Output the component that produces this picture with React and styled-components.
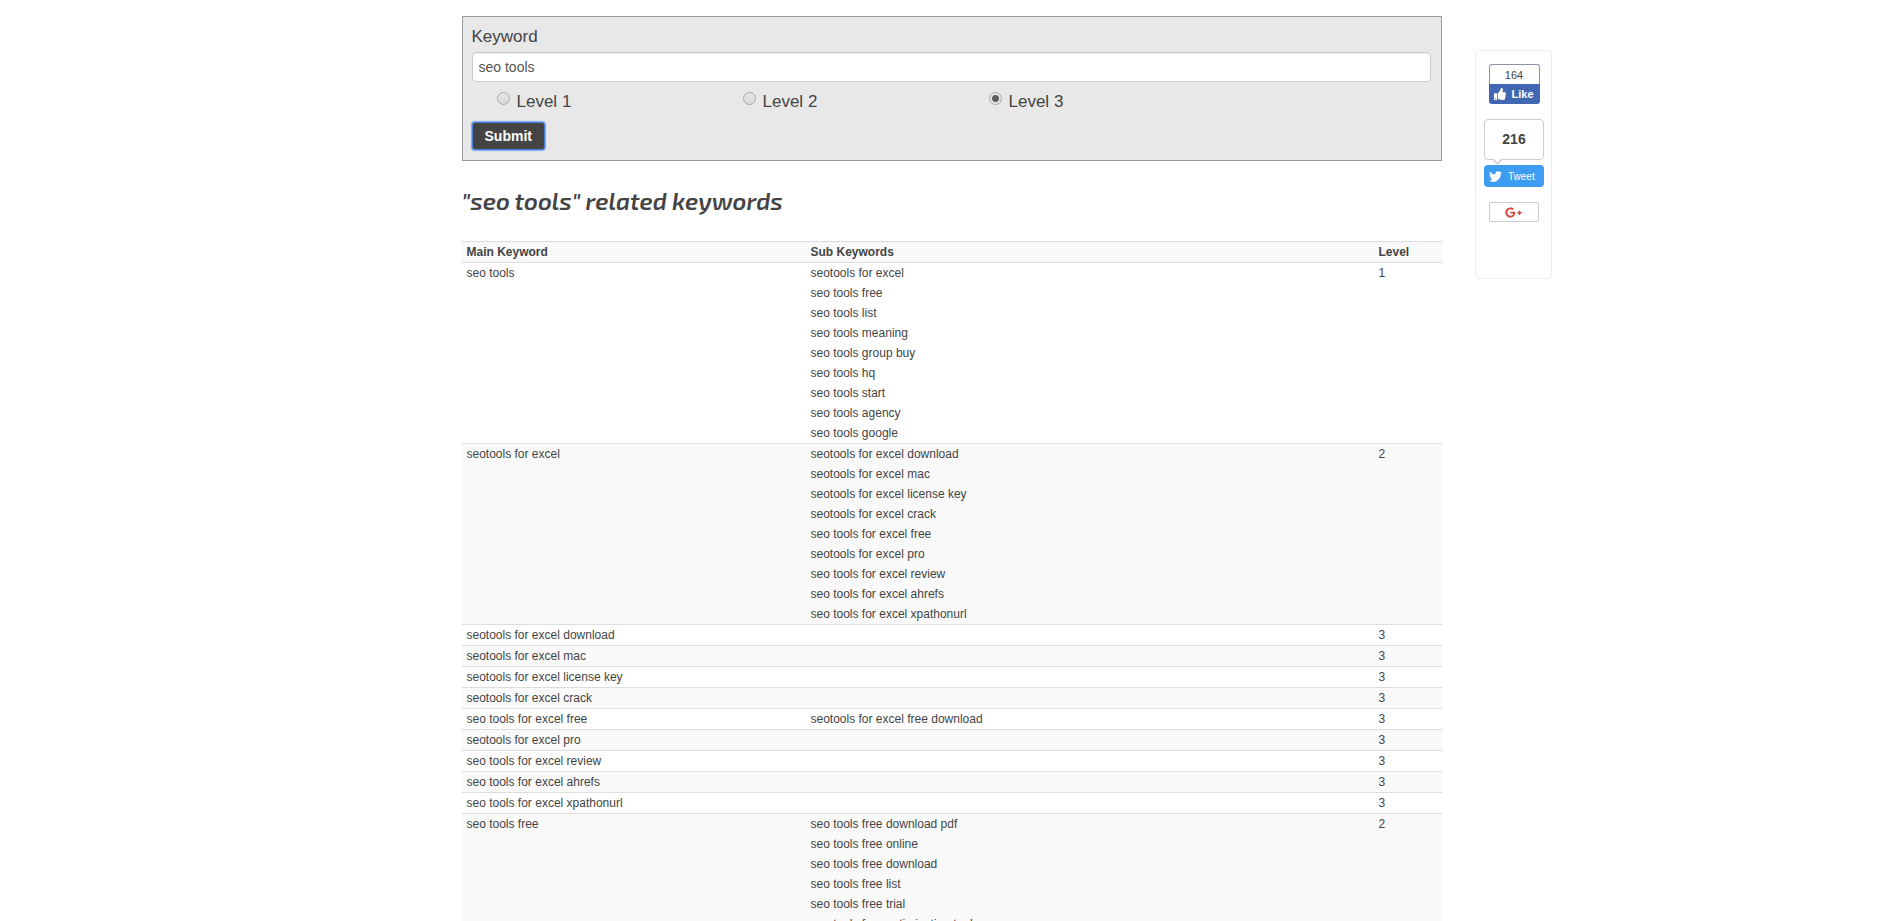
import React, { useState } from 'react';
import styled, { createGlobalStyle } from 'styled-components';
import { FaGooglePlusG, FaThumbsUp, FaTwitter } from 'react-icons/fa';

const COLORS = {
  text: '#444',
  line: '#ddd',
  stripe: '#f9f9f9',
  panel: '#e8e8e8',
  facebook: '#4267b2',
  twitter: '#3e9cf3',
  google: '#db4437'
};

const GlobalStyle = createGlobalStyle`
  * {
    box-sizing: border-box;
  }

  body {
    margin: 0;
    background: #fff;
    color: ${COLORS.text};
    font-family: Arial, "Liberation Sans", sans-serif;
    font-size: 12px;
    line-height: 20px;
  }
`;

const Page = styled.div`
  display: grid;
  grid-template-columns: 1fr minmax(0, 980px) 1fr;
  align-items: start;
`;

const Main = styled.main`
  grid-column: 2;
  padding-top: 16px;
`;

const SearchForm = styled.form`
  padding: 8px 10px 10px 9px;
  background: ${COLORS.panel};
  border: 1px solid #999;
`;

const FieldLabel = styled.label`
  display: block;
  margin-bottom: 3px;
  font-size: 17px;
  line-height: 24px;
`;

const KeywordInput = styled.input`
  display: block;
  width: 100%;
  height: 30px;
  padding: 4px 6px;
  background: #fff;
  border: 1px solid #ccc;
  border-radius: 4px;
  box-shadow: inset 0 1px 1px rgba(0, 0, 0, 0.075);
  color: #555;
  font-family: inherit;
  font-size: 14px;
  line-height: 20px;
`;

const Levels = styled.div`
  display: grid;
  grid-template-columns: repeat(3, 246px);
  padding: 8px 0 8px 25px;
`;

const LevelLabel = styled.label`
  display: flex;
  align-items: flex-start;
  gap: 7px;
  font-size: 17px;
  line-height: 24px;
`;

const Radio = styled.input`
  appearance: none;
  width: 13px;
  height: 13px;
  margin: 2px 0 0;
  border: 1px solid #a9a9a9;
  border-radius: 50%;
  background: linear-gradient(#e6e6e6, #d8d8d8);

  &:checked {
    background: radial-gradient(circle, #5c5c5c 3px, #e4e4e4 4px);
  }
`;

const SubmitButton = styled.button`
  display: block;
  height: 28px;
  padding: 4px 12px;
  background: ${COLORS.text};
  border: 1px solid #4c7fd6;
  border-radius: 3px;
  box-shadow: 0 0 1px 1px #7ba6ee;
  color: #fff;
  font-family: inherit;
  font-size: 14px;
  font-weight: 700;
  line-height: 18px;
`;

const Title = styled.h1`
  margin: 22px 0;
  font-family: "Exo 2", Roboto, sans-serif;
  font-size: 24px;
  font-style: italic;
  font-weight: 600;
  line-height: 36px;
`;

const KeywordTable = styled.table`
  width: 100%;
  border-collapse: collapse;
  border-spacing: 0;
  table-layout: fixed;
`;

const Column = styled.col`
  width: ${({ $width }) => $width};
`;

const Row = styled.tr`
  border-top: 1px solid ${COLORS.line};
  background: ${({ $striped }) => ($striped ? COLORS.stripe : '#fff')};
`;

const HeadCell = styled.th`
  padding: 0 5px;
  text-align: left;
`;

const Cell = styled.td`
  padding: 0 5px;
  vertical-align: top;
`;

const SubKeywords = styled.ul`
  margin: 0;
  padding: 0;
  list-style: none;
`;

const ShareBox = styled.aside`
  grid-column: 3;
  display: flex;
  flex-direction: column;
  align-items: center;
  width: 77px;
  min-height: 229px;
  margin: 50px 0 0 33px;
  padding: 13px 0 0 2px;
  border: 1px solid #eee;
  border-radius: 4px;
`;

const ShareItem = styled.div`
  display: flex;
  flex-direction: column;
  margin-bottom: 15px;
`;

const LikeCount = styled.div`
  height: 20px;
  border: 1px solid #8a93a8;
  border-bottom: 0;
  border-radius: 3px 3px 0 0;
  font-size: 11px;
  text-align: center;
`;

const LikeButton = styled.button`
  display: flex;
  align-items: center;
  justify-content: center;
  gap: 5px;
  width: 51px;
  height: 20px;
  padding: 0;
  background: ${COLORS.facebook};
  border: 0;
  border-radius: 0 0 3px 3px;
  color: #fff;
  font-family: inherit;
  font-size: 11px;
  font-weight: 700;
`;

const TweetCount = styled.div`
  position: relative;
  height: 41px;
  margin-bottom: 5px;
  border: 1px solid #ccc;
  border-radius: 4px;
  font-size: 14px;
  font-weight: 700;
  line-height: 39px;
  text-align: center;

  &::after {
    content: '';
    position: absolute;
    bottom: -4px;
    left: 9px;
    width: 6px;
    height: 6px;
    background: #fff;
    border: solid #bbb;
    border-width: 0 1px 1px 0;
    transform: rotate(45deg);
  }
`;

const TweetButton = styled.button`
  display: flex;
  align-items: center;
  gap: 6px;
  width: 60px;
  height: 22px;
  padding: 0 5px;
  background: ${COLORS.twitter};
  border: 0;
  border-radius: 4px;
  color: #fff;
  font-family: inherit;
  font-size: 10px;
`;

const PlusButton = styled.button`
  display: flex;
  align-items: center;
  justify-content: center;
  width: 50px;
  height: 20px;
  padding: 0 2px 0 0;
  background: #fff;
  border: 1px solid #ccc;
  border-radius: 2px;
  color: ${COLORS.google};
`;

const LEVELS = [1, 2, 3];

const RESULTS = [
  {
    main: 'seo tools',
    level: 1,
    subs: [
      'seotools for excel',
      'seo tools free',
      'seo tools list',
      'seo tools meaning',
      'seo tools group buy',
      'seo tools hq',
      'seo tools start',
      'seo tools agency',
      'seo tools google'
    ]
  },
  {
    main: 'seotools for excel',
    level: 2,
    subs: [
      'seotools for excel download',
      'seotools for excel mac',
      'seotools for excel license key',
      'seotools for excel crack',
      'seo tools for excel free',
      'seotools for excel pro',
      'seo tools for excel review',
      'seo tools for excel ahrefs',
      'seo tools for excel xpathonurl'
    ]
  },
  { main: 'seotools for excel download', level: 3, subs: [] },
  { main: 'seotools for excel mac', level: 3, subs: [] },
  { main: 'seotools for excel license key', level: 3, subs: [] },
  { main: 'seotools for excel crack', level: 3, subs: [] },
  { main: 'seo tools for excel free', level: 3, subs: ['seotools for excel free download'] },
  { main: 'seotools for excel pro', level: 3, subs: [] },
  { main: 'seo tools for excel review', level: 3, subs: [] },
  { main: 'seo tools for excel ahrefs', level: 3, subs: [] },
  { main: 'seo tools for excel xpathonurl', level: 3, subs: [] },
  {
    main: 'seo tools free',
    level: 2,
    subs: [
      'seo tools free download pdf',
      'seo tools free online',
      'seo tools free download',
      'seo tools free list',
      'seo tools free trial',
      'seo tools free optimization tools'
    ]
  }
];

function SharePanel() {
  return (
    <ShareBox>
      <ShareItem>
        <LikeCount>164</LikeCount>
        <LikeButton type="button">
          <FaThumbsUp size={12} />
          Like
        </LikeButton>
      </ShareItem>
      <ShareItem>
        <TweetCount>216</TweetCount>
        <TweetButton type="button">
          <FaTwitter size={13} />
          Tweet
        </TweetButton>
      </ShareItem>
      <PlusButton type="button" aria-label="Google Plus">
        <FaGooglePlusG size={17} />
      </PlusButton>
    </ShareBox>
  );
}

export default function App() {
  const [keyword, setKeyword] = useState('seo tools');
  const [level, setLevel] = useState(3);

  return (
    <>
      <GlobalStyle />
      <Page>
        <Main>
          <SearchForm onSubmit={(e) => e.preventDefault()}>
            <FieldLabel htmlFor="keyword">Keyword</FieldLabel>
            <KeywordInput id="keyword" type="text" value={keyword} onChange={(e) => setKeyword(e.target.value)} />
            <Levels>
              {LEVELS.map((value) => (
                <LevelLabel key={value} htmlFor={`level-${value}`}>
                  <Radio
                    id={`level-${value}`}
                    type="radio"
                    name="level"
                    checked={level === value}
                    onChange={() => setLevel(value)}
                  />
                  Level {value}
                </LevelLabel>
              ))}
            </Levels>
            <SubmitButton type="submit">Submit</SubmitButton>
          </SearchForm>

          <Title>"seo tools" related keywords</Title>

          <KeywordTable>
            <colgroup>
              <Column $width="344px" />
              <Column $width="auto" />
              <Column $width="68px" />
            </colgroup>
            <thead>
              <Row $striped>
                <HeadCell>Main Keyword</HeadCell>
                <HeadCell>Sub Keywords</HeadCell>
                <HeadCell>Level</HeadCell>
              </Row>
            </thead>
            <tbody>
              {RESULTS.map((result, index) => (
                <Row key={result.main} $striped={index % 2 === 1}>
                  <Cell>{result.main}</Cell>
                  <Cell>
                    <SubKeywords>
                      {result.subs.map((sub) => (
                        <li key={sub}>{sub}</li>
                      ))}
                    </SubKeywords>
                  </Cell>
                  <Cell>{result.level}</Cell>
                </Row>
              ))}
            </tbody>
          </KeywordTable>
        </Main>
        <SharePanel />
      </Page>
    </>
  );
}
